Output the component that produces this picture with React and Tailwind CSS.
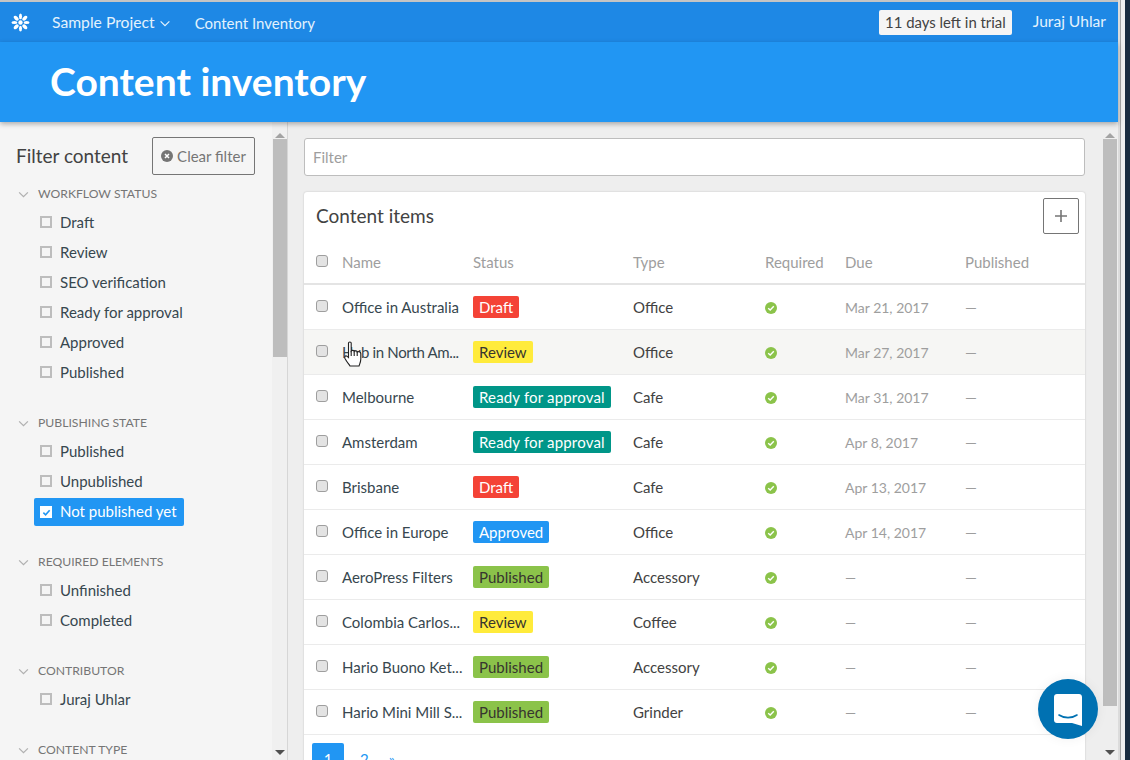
import React from "react";

const filterGroups = [
  { title: "Workflow status", items: ["Draft", "Review", "SEO verification", "Ready for approval", "Approved", "Published"] },
  { title: "Publishing state", items: ["Published", "Unpublished", "Not published yet"] },
  { title: "Required elements", items: ["Unfinished", "Completed"] },
  { title: "Contributor", items: ["Juraj Uhlar"] },
  { title: "Content type", items: [] },
];

const badgeStyles = {
  Draft: "bg-[#f44336] text-white",
  Review: "bg-[#ffeb3b] text-[#37352f]",
  "Ready for approval": "bg-[#009688] text-white tracking-[0.17px]",
  Approved: "bg-[#2196f3] text-white",
  Published: "bg-[#8bc34a] text-[#37352f]",
};

const columns = ["Name", "Status", "Type", "Required", "Due", "Published"];

const rows = [
  { name: "Office in Australia", status: "Draft", type: "Office", due: "Mar 21, 2017" },
  { name: "Hub in North Am...", status: "Review", type: "Office", due: "Mar 27, 2017", hover: true },
  { name: "Melbourne", status: "Ready for approval", type: "Cafe", due: "Mar 31, 2017" },
  { name: "Amsterdam", status: "Ready for approval", type: "Cafe", due: "Apr 8, 2017" },
  { name: "Brisbane", status: "Draft", type: "Cafe", due: "Apr 13, 2017" },
  { name: "Office in Europe", status: "Approved", type: "Office", due: "Apr 14, 2017" },
  { name: "AeroPress Filters", status: "Published", type: "Accessory", due: "—" },
  { name: "Colombia Carlos...", status: "Review", type: "Coffee", due: "—" },
  { name: "Hario Buono Ket...", status: "Published", type: "Accessory", due: "—" },
  { name: "Hario Mini Mill S...", status: "Published", type: "Grinder", due: "—" },
];

const gridCols = "grid grid-cols-[26px_131px_160px_132px_80px_120px_1fr] items-center pl-[12px]";

function Chevron({ className }) {
  return (
    <svg viewBox="0 0 12 8" className={className} fill="none" stroke="currentColor" strokeWidth="1.4">
      <path d="M1 1.5 6 6.5 11 1.5" />
    </svg>
  );
}

function Logo() {
  return (
    <svg viewBox="0 0 20 20" className="w-[19px] h-[19px]" fill="white">
      <circle cx="10" cy="10" r="2.3" />
      {[0, 45, 90, 135, 180, 225, 270, 315].map((a) => (
        <ellipse key={a} cx="10" cy="3.6" rx={a % 90 === 0 ? 1.6 : 1.9} ry="3.1" transform={`rotate(${a} 10 10)`} />
      ))}
    </svg>
  );
}

function Scrollbar({ thumbHeight, className }) {
  return (
    <div className={`w-[15px] shrink-0 flex flex-col items-center relative ${className}`}>
      <div className="mt-[11px] w-0 h-0 border-x-[5px] border-x-transparent border-b-[5px] border-b-[#a3a3a3]" />
      <div className="mt-[1px] w-[14px] bg-[#bdbdbd]" style={{ height: thumbHeight }} />
      <div className="mt-auto mb-[5px] w-0 h-0 border-x-[5px] border-x-transparent border-t-[5px] border-t-[#505050]" />
    </div>
  );
}

function FilterItem({ label, active }) {
  if (active) {
    return (
      <div className="h-[30px] flex items-center pl-[34px] pt-[2px]">
        <div className="h-[28px] w-[150px] bg-[#2196f3] rounded-[2px] flex items-center pl-[6px] gap-[8px] text-white">
          <span className="w-[12px] h-[12px] bg-white flex items-center justify-center">
            <svg viewBox="0 0 10 10" className="w-[9px] h-[9px]" fill="none" stroke="#2196f3" strokeWidth="1.8">
              <path d="M1.5 5.2 4 7.5 8.5 2.5" />
            </svg>
          </span>
          <span className="pb-[2px]">{label}</span>
        </div>
      </div>
    );
  }
  return (
    <div className="h-[30px] flex items-center pl-[40px] gap-[8px] text-[#37474f]">
      <span className="w-[12px] h-[12px] border-2 border-[#bdbdbd] bg-[#f5f5f5]" />
      {label}
    </div>
  );
}

function Sidebar() {
  return (
    <aside className="w-[288px] shrink-0 flex bg-[#f5f5f5] border-r border-[#d6d6d6] overflow-hidden">
      <div className="w-[272px] shrink-0 overflow-hidden">
        <div className="flex items-center justify-between pl-[16px] pr-[17px] pt-[13px] h-[55px]">
          <h2 className="text-[19px] text-[#424242]">Filter content</h2>
          <button className="w-[103px] h-[38px] border border-[#757575] rounded-[2px] flex items-center justify-center gap-[4px] text-[#757575]">
            <svg viewBox="0 0 12 12" className="w-[12px] h-[12px]">
              <circle cx="6" cy="6" r="6" fill="#757575" />
              <path d="M4 4 8 8M8 4 4 8" stroke="white" strokeWidth="1.5" />
            </svg>
            Clear filter
          </button>
        </div>
        {filterGroups.map((group) => (
          <section key={group.title} className="mb-[19px]">
            <div className="h-[30px] flex items-center pt-[4px] pl-[18px] gap-[9px] text-[12.2px] uppercase text-[#757575]">
              <Chevron className="w-[11px] h-[7px] text-[#b0b0b0]" />
              {group.title}
            </div>
            {group.items.map((item) => (
              <FilterItem key={item} label={item} active={item === "Not published yet"} />
            ))}
          </section>
        ))}
      </div>
      <Scrollbar thumbHeight="218px" className="bg-[#f0f0f0]" />
    </aside>
  );
}

function Checkbox() {
  return <span className="block mb-[2px] w-[12px] h-[12px] rounded-[3px] border border-[#9e9e9e] bg-[#e3e3e3]" />;
}

function Badge({ status }) {
  return (
    <span className={`inline-flex h-[22px] items-center px-[6px] rounded-[2px] ${badgeStyles[status]}`}>{status}</span>
  );
}

function ContentRow({ row }) {
  return (
    <div className={`${gridCols} h-[45px] border-b border-[#ebebeb] ${row.hover ? "bg-[#f6f6f4]" : "bg-white"}`}>
      <Checkbox />
      <span className={`text-[#37474f] whitespace-nowrap ${row.hover ? "tracking-[-0.35px]" : ""}`}>{row.name}</span>
      <span className="flex"><Badge status={row.status} /></span>
      <span className="text-[#424242]">{row.type}</span>
      <span className="flex pt-[2px]">
        <svg viewBox="0 0 12 12" className="w-[12px] h-[12px]">
          <circle cx="6" cy="6" r="6" fill="#8bc34a" />
          <path d="M3.2 6.2 5.2 8 8.8 4.2" fill="none" stroke="white" strokeWidth="1.4" />
        </svg>
      </span>
      <span className="text-[14px] text-[#9e9e9e]">{row.due}</span>
      <span className="text-[#9e9e9e]">—</span>
    </div>
  );
}

function ContentCard() {
  return (
    <div className="mt-[16px] w-[781px] bg-white rounded-[3px] shadow-[0_0_2px_rgba(0,0,0,0.2)]">
      <div className="h-[48px] flex items-start justify-between pl-[12px] pr-[6px]">
        <h3 className="mt-[10px] text-[19px] text-[#424242]">Content items</h3>
        <button className="w-[36px] h-[36px] mt-[6px] border border-[#757575] rounded-[2px] flex items-center justify-center">
          <svg viewBox="0 0 12 12" className="w-[12px] h-[12px]">
            <path d="M6 0V12M0 6H12" stroke="#757575" strokeWidth="1.6" />
          </svg>
        </button>
      </div>
      <div className={`${gridCols} h-[45px] border-b-2 border-[#e4e4e4] text-[#9e9e9e]`}>
        <Checkbox />
        {columns.map((col) => (
          <span key={col} className="pt-[2px]">{col}</span>
        ))}
      </div>
      {rows.map((row) => (
        <ContentRow key={row.name} row={row} />
      ))}
      <div className="flex items-center pl-[8px] pt-[8px] pb-[10px] text-[#2196f3]">
        <span className="w-[32px] h-[32px] bg-[#2196f3] rounded-[2px] text-white flex items-center justify-center">1</span>
        <span className="ml-[16px]">2</span>
        <span className="ml-[20px]">»</span>
      </div>
    </div>
  );
}

export default function App() {
  return (
    <div
      className="w-[1130px] h-[760px] flex overflow-hidden bg-[#1a2c40] text-[15px] relative"
      style={{ fontFamily: '"Lato", "Noto Sans", sans-serif' }}
    >
      <div className="w-[1118px] h-full shrink-0 flex flex-col border-t-2 border-[#c4c4c4] bg-[#eeeeee]">
        <nav className="h-[40px] shrink-0 bg-[#1e88e5] flex items-center text-white pl-[11px] pr-[12px]">
          <Logo />
          <span className="ml-[22px] mt-[1px] flex items-center gap-[4px] text-[15.7px] text-[#e3f2fd]">
            Sample Project
            <Chevron className="w-[12px] h-[7px] mt-[2px]" />
          </span>
          <span className="ml-[24px] mt-[2px] text-[#e3f2fd]">Content Inventory</span>
          <span className="ml-auto h-[25px] px-[6px] flex items-center bg-[#f5f5f5] rounded-[2px] text-[14.9px] text-[#424242]">11 days left in trial</span>
          <span className="ml-[21px] text-[15.6px] text-[#e3f2fd]">Juraj Uhlar</span>
        </nav>
        <header className="h-[80px] shrink-0 bg-[#2196f3] flex items-center pl-[50px] pb-[2px] shadow-[0_2px_5px_rgba(0,0,0,0.3)] z-10">
          <h1 className="text-[39px] font-bold text-white">Content inventory</h1>
        </header>
        <div className="flex-1 flex min-h-0">
          <Sidebar />
          <main className="flex-1 flex min-w-0">
            <div className="flex-1 pl-[16px] pt-[16px] overflow-hidden">
              <div className="w-[781px] h-[38px] bg-white border border-[#bdbdbd] rounded-[3px] flex items-center pl-[8px] text-[#9e9e9e]">
                Filter
              </div>
              <ContentCard />
            </div>
            <Scrollbar thumbHeight="567px" className="bg-[#eeeeee] mr-[1px]" />
          </main>
        </div>
      </div>
      <div className="w-[2px] shrink-0 bg-[#dcdcdc]" />
      <div className="w-[1px] shrink-0 bg-[#a8a8a8]" />
      <div className="w-[4px] shrink-0 bg-[#f0f0f0]" />

      {/* mouse pointer */}
      <svg viewBox="0 0 20 26" className="absolute left-[344px] top-[341px] w-[20px] h-[26px]" fill="white" stroke="#222" strokeWidth="1.1">
        <path d="M4.5 2C4.5 .6 7.2.6 7.2 2V10C8 9 10 9.2 10.2 10.4 11 9.4 13 9.8 13.2 11 14.2 10.2 16.6 10.8 16.8 12.6V18C16.8 21 15.6 23 15 25H6C5 22.8 3 21.5 1 17.5.3 16 1.2 14.2 3 15.2L4.5 16.6Z" />
        <path d="M7.2 10V15M10.2 10.4V15M13.2 11V15" fill="none" />
      </svg>

      {/* chat launcher */}
      <div className="absolute left-[1038px] top-[679px] w-[60px] h-[60px] rounded-full bg-[#0071b2] flex items-center justify-center shadow-[0_0_12px_rgba(0,0,0,0.06)]">
        <svg viewBox="0 0 28 32" className="w-[28px] h-[32px] mt-[2px]">
          <path d="M3 0H25C26.7 0 28 1.3 28 3V32L18 29H3C1.3 29 0 27.7 0 26V3C0 1.3 1.3 0 3 0Z" fill="white" />
          <path d="M5 21C10 24.5 18 24.5 23 21" fill="none" stroke="#0071b2" strokeWidth="1.6" strokeLinecap="round" />
        </svg>
      </div>
    </div>
  );
}
